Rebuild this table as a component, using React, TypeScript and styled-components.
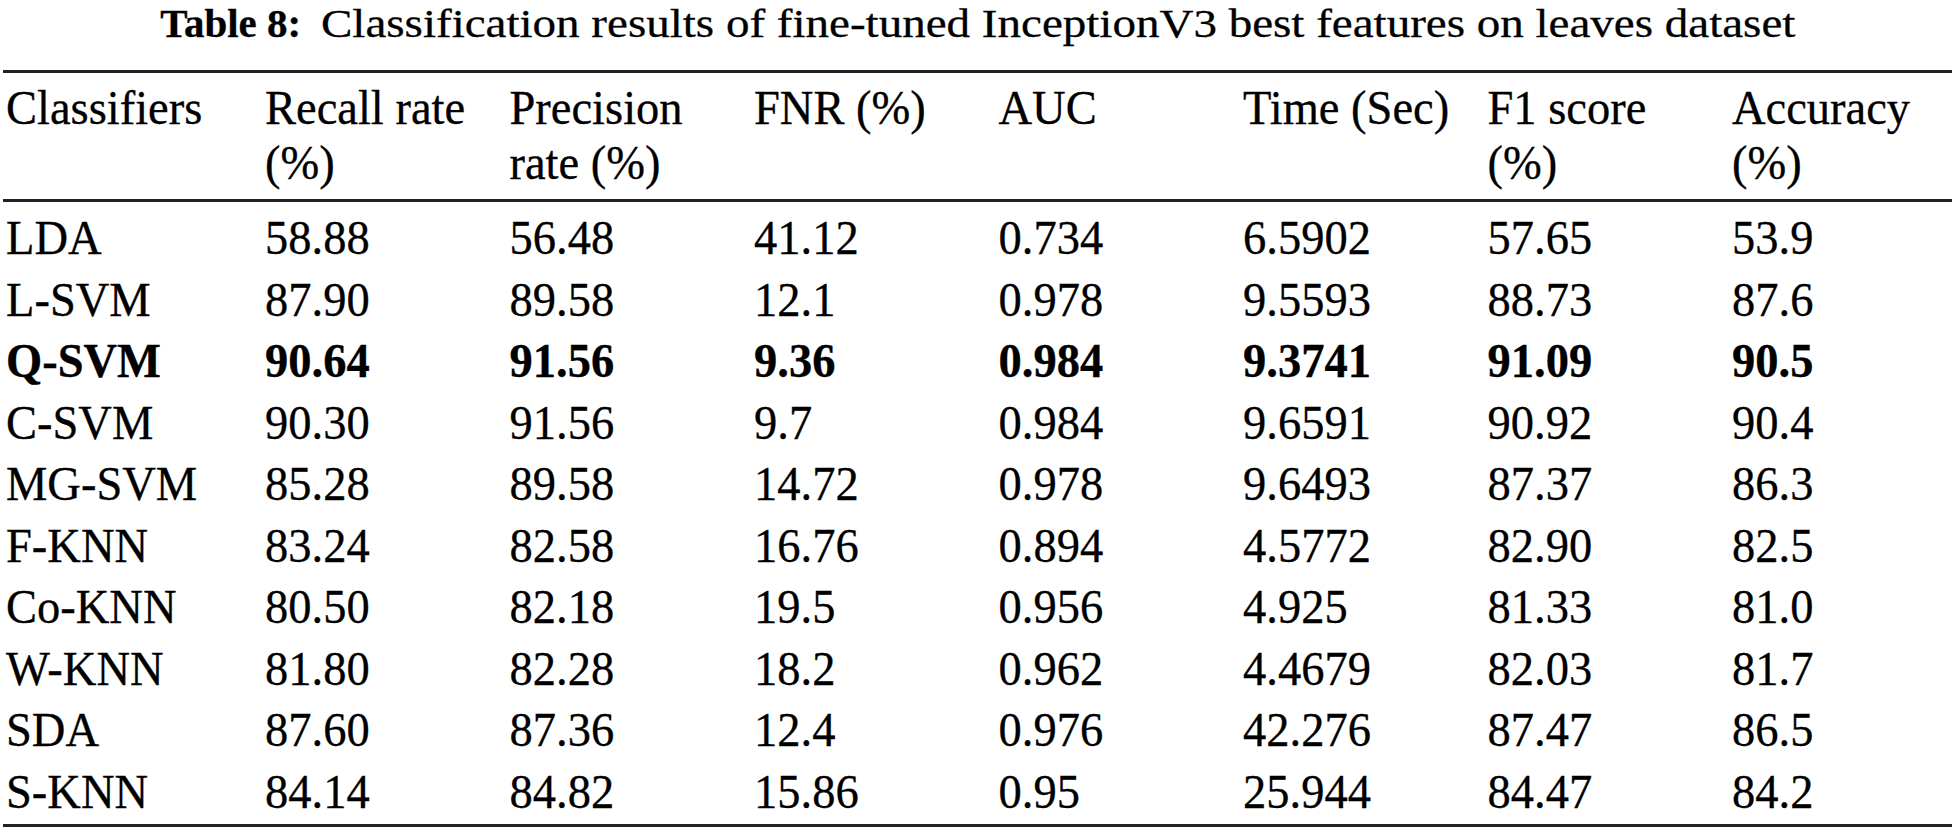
import styled, { createGlobalStyle } from "styled-components";

const GlobalStyle = createGlobalStyle`
  html, body {
    margin: 0;
    padding: 0;
    background: #fff;
  }
  body {
    font-family: "Liberation Serif", "Times New Roman", serif;
    color: #000;
  }
`;

interface ResultRow {
  name: string;
  values: string[];
  best?: boolean;
}

const headers: string[][] = [
  ["Classifiers"],
  ["Recall rate", "(%)"],
  ["Precision", "rate (%)"],
  ["FNR (%)"],
  ["AUC"],
  ["Time (Sec)"],
  ["F1 score", "(%)"],
  ["Accuracy", "(%)"],
];

const rows: ResultRow[] = [
  { name: "LDA", values: ["58.88", "56.48", "41.12", "0.734", "6.5902", "57.65", "53.9"] },
  { name: "L-SVM", values: ["87.90", "89.58", "12.1", "0.978", "9.5593", "88.73", "87.6"] },
  { name: "Q-SVM", values: ["90.64", "91.56", "9.36", "0.984", "9.3741", "91.09", "90.5"], best: true },
  { name: "C-SVM", values: ["90.30", "91.56", "9.7", "0.984", "9.6591", "90.92", "90.4"] },
  { name: "MG-SVM", values: ["85.28", "89.58", "14.72", "0.978", "9.6493", "87.37", "86.3"] },
  { name: "F-KNN", values: ["83.24", "82.58", "16.76", "0.894", "4.5772", "82.90", "82.5"] },
  { name: "Co-KNN", values: ["80.50", "82.18", "19.5", "0.956", "4.925", "81.33", "81.0"] },
  { name: "W-KNN", values: ["81.80", "82.28", "18.2", "0.962", "4.4679", "82.03", "81.7"] },
  { name: "SDA", values: ["87.60", "87.36", "12.4", "0.976", "42.276", "87.47", "86.5"] },
  { name: "S-KNN", values: ["84.14", "84.82", "15.86", "0.95", "25.944", "84.47", "84.2"] },
];

export default function App() {
  return (
    <Page>
      <GlobalStyle />
      <Caption>
        <CaptionLabel>Table 8:</CaptionLabel>
        <CaptionText>
          Classification results of fine-tuned InceptionV3 best features on leaves dataset
        </CaptionText>
      </Caption>
      <Table>
        <HeadRow>
          {headers.map((lines, i) => (
            <HeadCell key={i}>
              {lines.map((line, j) => (
                <div key={j}>{line}</div>
              ))}
            </HeadCell>
          ))}
        </HeadRow>
        <Body>
          {rows.map(row => (
            <Row key={row.name}>
              <Cell bold={row.best}>{row.name}</Cell>
              {row.values.map((v, i) => (
                <Cell key={i} bold={row.best}>
                  {v}
                </Cell>
              ))}
            </Row>
          ))}
        </Body>
      </Table>
    </Page>
  );
}

const Page = styled.div`
  width: 1955px;
  height: 830px;
  overflow: hidden;
  background: #fff;
`;

const Caption = styled.div`
  height: 70px;
  display: flex;
  justify-content: center;
  align-items: baseline;
  font-size: 41px;
  line-height: 46px;
  white-space: nowrap;
  -webkit-text-stroke: 0.3px #000;
`;

const CaptionLabel = styled.span`
  font-weight: bold;
  margin-right: 20px;
`;

/* the caption body is set wider than its height, as in the printed table */
const CaptionText = styled.span`
  display: inline-block;
  margin-right: 188px;
  transform: scaleX(1.147);
  transform-origin: left center;
`;

const Table = styled.div`
  margin-left: 3px;
  width: 1949px;
  border-top: 3px solid #222;
  border-bottom: 3px solid #222;
  font-size: 46.5px;
  -webkit-text-stroke: 0.3px #000;
`;

const columns = `259px repeat(6, 244.5px) 1fr`;

const HeadRow = styled.div`
  display: grid;
  grid-template-columns: ${columns};
  padding: 10px 0 12px;
  border-bottom: 3px solid #222;
  line-height: 52px;
`;

const HeadCell = styled.div`
  padding-left: 3px;
  white-space: nowrap;
  transform: scaleY(1.06);
  transform-origin: left 42px;
`;

const Body = styled.div`
  padding: 6px 0 1px;
`;

const Row = styled.div`
  display: grid;
  grid-template-columns: ${columns};
  height: 61.5px;
  line-height: 61.5px;
`;

const Cell = styled.div<{ bold?: boolean }>`
  padding-left: 3px;
  white-space: nowrap;
  font-weight: ${props => (props.bold ? "bold" : "normal")};
  transform: scaleY(1.06);
  transform-origin: left 46px;
`;
